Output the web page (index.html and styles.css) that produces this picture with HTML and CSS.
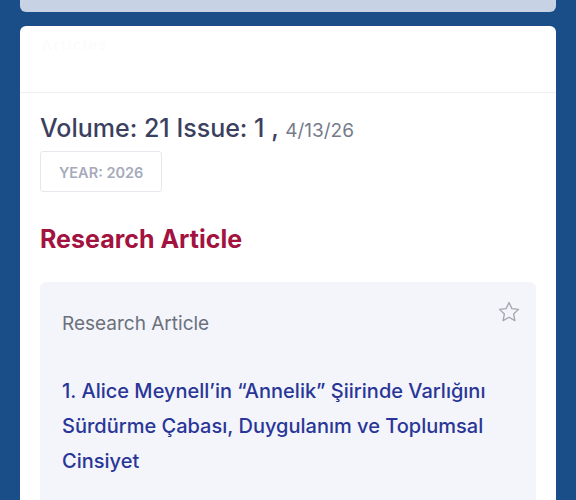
FILE: index.html
```html
<!DOCTYPE html>
<html lang="tr">
<head>
    <meta charset="UTF-8">
    <meta name="viewport" content="width=device-width, initial-scale=1.0">
    <title>Issue</title>
    <link rel="stylesheet" href="styles.css">
</head>
<body>

    <div class="top-card"></div>

    <div class="issue-card">
        <div class="issue-header">
            <span class="faded">Articles</span>
        </div>

        <div class="issue-body">
            <h2 class="issue-title">Volume: 21 Issue: 1 , <span class="issue-date">4/13/26</span></h2>
            <div class="year-badge">YEAR: 2026</div>

            <h3 class="section-title">Research Article</h3>

            <!-- Article item -->
            <div class="article">
                <div class="article-top">
                    <span class="article-type">Research Article</span>
                    <svg class="star" width="24" height="24" viewBox="0 0 24 24" fill="none" stroke="currentColor" stroke-width="1.3" stroke-linejoin="round">
                        <path d="M12 2.5l2.9 6.1 6.6.8-4.9 4.6 1.3 6.6L12 17.3l-5.9 3.3 1.3-6.6-4.9-4.6 6.6-.8z"/>
                    </svg>
                </div>
                <a class="article-title" href="#">1. Alice Meynell’in “Annelik” Şiirinde Varlığını Sürdürme Çabası, Duygulanım ve Toplumsal Cinsiyet</a>
            </div>
        </div>
    </div>

</body>
</html>
```

FILE: styles.css
```css
body {
    margin: 0;
    padding: 0 20px;
    background: #1a4e89;
    font-family: 'Inter', 'Noto Sans', sans-serif;
    height: 500px;
    overflow: hidden;
}

.top-card {
    height: 12px;
    background: #c7d2e5;
    border-radius: 0 0 6px 6px;
    margin-bottom: 14px;
}

.issue-card {
    background: #fff;
    border-radius: 6px;
    height: 600px;
}

.issue-header {
    height: 67px;
    border-bottom: 1px solid #eceef2;
    padding: 8px 22px 0;
    box-sizing: border-box;
}

.faded {
    font-size: 14px;
    color: #fafbfc;
    letter-spacing: 2px;
}

.issue-body {
    padding: 18px 20px 0;
}

.issue-title {
    margin: 0;
    font-size: 25px;
    font-weight: 500;
    color: #3b4060;
    line-height: 34px;
}

.issue-date {
    font-size: 19px;
    font-weight: 400;
    color: #767b8a;
}

.year-badge {
    display: inline-block;
    margin-top: 3px;
    padding: 0 18px;
    height: 41px;
    line-height: 41px;
    border: 1px solid #e6e8ed;
    border-radius: 3px;
    box-sizing: border-box;
    font-size: 14.5px;
    font-weight: 600;
    color: #a6aabb;
}

.section-title {
    margin: 31px 0 0;
    font-size: 25px;
    font-weight: 700;
    color: #a3133f;
    line-height: 32px;
}

.article {
    margin-top: 27px;
    background: #f3f5fa;
    border-radius: 6px;
    padding: 18px 15px 30px 22px;
}

.article-top {
    display: flex;
    justify-content: space-between;
    align-items: flex-start;
}

.article-type {
    margin-top: 12px;
    font-size: 19px;
    color: #6c707c;
}

.star {
    color: #a2a6b0;
}

.article-title {
    display: block;
    margin-top: 39px;
    font-size: 20px;
    font-weight: 500;
    line-height: 35px;
    color: #2a3598;
    text-decoration: none;
}
```
